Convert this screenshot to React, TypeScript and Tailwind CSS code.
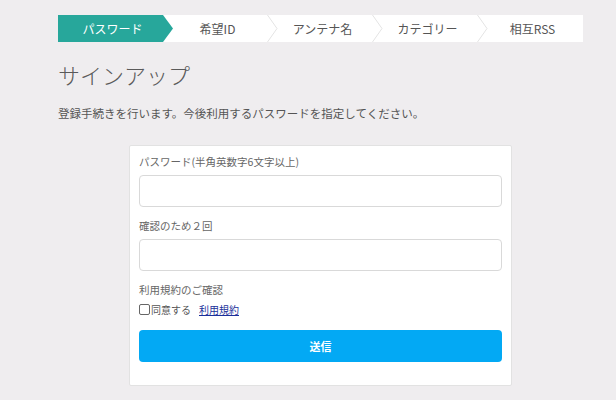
import React from "react";

const steps = ["パスワード", "希望ID", "アンテナ名", "カテゴリー", "相互RSS"];

export default function App() {
  return (
    <div
      className="w-[616px] h-[400px] bg-[#efedef] overflow-hidden text-[#555]"
      style={{ fontFamily: '"Noto Sans CJK JP", "Noto Sans", sans-serif' }}
    >
      <div className="pl-[58px] pt-[15px]">
        <div className="flex w-[525px] h-[27px] bg-white">
          {steps.map((s, i) => (
            <div
              key={s}
              className={
                i === 0
                  ? "relative w-[105px] h-full flex items-center justify-center bg-[#27a79b] text-white text-[12px]"
                  : "relative w-[105px] h-full flex items-center justify-center text-[#555] text-[12px]"
              }
            >
              <span className="relative z-10 pl-[4px]">{s}</span>
              {i === 0 ? (
                <svg className="absolute right-[-10px] top-0 z-10" width="10" height="27" viewBox="0 0 10 27">
                  <polygon points="0,0 10,13.5 0,27" fill="#27a79b" />
                </svg>
              ) : i < steps.length - 1 ? (
                <svg className="absolute right-[-10px] top-0 z-10" width="11" height="27" viewBox="0 0 11 27">
                  <polyline points="0.5,0 10,13.5 0.5,27" fill="none" stroke="#e4e4e4" strokeWidth="1" />
                </svg>
              ) : null}
            </div>
          ))}
        </div>
        <h1 className="mt-[17px] text-[22px] leading-[30px] text-[#5a5a5a] font-light">サインアップ</h1>
        <p className="mt-[16px] text-[11.5px] leading-[16px] text-[#555]">
          登録手続きを行います。今後利用するパスワードを指定してください。
        </p>
      </div>
      <div className="ml-[129px] mt-[24px] w-[383px] h-[241px] bg-white border border-[#e2e2e2] rounded-[2px] px-[9px] pt-[9px]">
        <div className="text-[10.5px] leading-[14px] text-[#666]">パスワード(半角英数字6文字以上)</div>
        <input type="password" className="mt-[6px] block w-[363px] h-[32px] border border-[#d9d9d9] rounded-[4px] bg-white outline-none" />
        <div className="mt-[12px] text-[10.5px] leading-[14px] text-[#666]">確認のため２回</div>
        <input type="password" className="mt-[6px] block w-[363px] h-[32px] border border-[#d9d9d9] rounded-[4px] bg-white outline-none" />
        <div className="mt-[12px] text-[10.5px] leading-[14px] text-[#666]">利用規約のご確認</div>
        <div className="mt-[5px] flex items-center h-[14px] text-[10px] text-[#555]">
          <span className="inline-block w-[11px] h-[11px] border border-[#666] rounded-[2px] bg-white mr-[1px]" />
          <span>同意する</span>
          <a href="#" className="ml-[8px] text-[#1a2f9a] underline">利用規約</a>
        </div>
        <button className="mt-[14px] block w-[363px] h-[32px] rounded-[4px] bg-[#03a9f4] text-white text-[11px] font-bold">
          送信
        </button>
      </div>
    </div>
  );
}
